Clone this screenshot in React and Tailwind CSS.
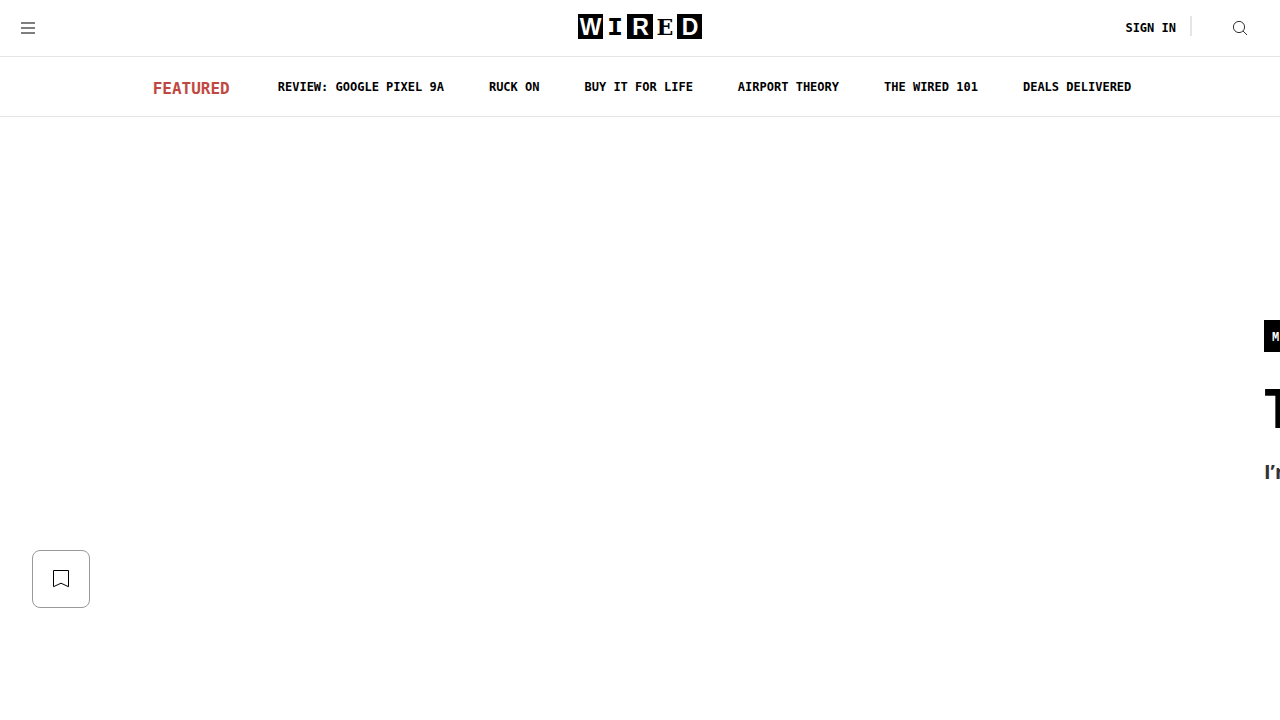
import React from "react";

const featuredLinks = [
  "Review: Google Pixel 9a",
  "Ruck On",
  "Buy It for Life",
  "Airport Theory",
  "The Wired 101",
  "Deals Delivered"
];

function Logo() {
  return (
    <svg width="124" height="33" viewBox="0 -4 124 33" role="img" aria-label="WIRED">
      <path d="M0 0h25v25H0zM49 0h26v25H49zM99 0h25v25H99z" fill="#000" />
      <g textAnchor="middle" fontWeight="700">
        <g fill="#fff" fontSize="23" fontFamily="'Liberation Sans', sans-serif">
          <text x="12.5" y="21">W</text>
          <text x="62.5" y="21">R</text>
          <text x="112" y="21">D</text>
        </g>
        <text x="37" y="21" fontSize="26" fontFamily="'Liberation Mono', monospace">I</text>
        <text x="87" y="21" fontSize="22" fontFamily="'DejaVu Serif', serif">E</text>
      </g>
    </svg>
  );
}

function Header() {
  return (
    <header className="grid h-[57px] grid-cols-3 items-center border-b border-[#e5e5e5] px-5">
      <button type="button" aria-label="Open navigation menu" className="w-4">
        <svg width="16" height="16" viewBox="0 0 16 16" fill="#7f7f7f">
          <path d="M1 2h14v2H1zM1 7h14v2H1zM1 12h14v2H1z" />
        </svg>
      </button>
      <a href="#home" className="justify-self-center pb-1">
        <Logo />
      </a>
      <div className="flex items-center justify-end pr-3">
        <a href="#sign-in" className="font-['DejaVu_Sans_Mono',monospace] text-xs leading-4 font-bold uppercase">
          Sign In
        </a>
        <span className="mr-10 mb-1 ml-3.5 h-5 w-0.5 bg-[#e5e5e5]" />
        <button type="button" aria-label="Search">
          <svg width="16" height="16" viewBox="0 0 16 16" fill="none" stroke="#333">
            <circle cx="7" cy="7" r="5.6" />
            <path d="M11 11l4 4" />
          </svg>
        </button>
      </div>
    </header>
  );
}

function FeaturedNav() {
  return (
    <nav
      aria-label="Featured"
      className="flex h-15 items-center justify-center border-b border-[#e5e5e5] pl-1 font-['DejaVu_Sans_Mono',monospace] font-bold uppercase"
    >
      <span className="mr-12 pt-1 text-base leading-5 text-[#c14842]">Featured</span>
      <ul className="flex gap-[45px] text-xs leading-4">
        {featuredLinks.map((label) => (
          <li key={label}>
            <a href="#featured">{label}</a>
          </li>
        ))}
      </ul>
    </nav>
  );
}

function Story() {
  return (
    <main>
      {/* Lead media takes the row, the headline block starts at its right edge */}
      <div className="flex h-[433px] overflow-hidden">
        <div className="w-[calc(100%-16px)] shrink-0" />
        <div className="shrink-0 pt-[203px]">
          <a
            href="#section"
            className="flex h-8 w-8 items-center bg-black px-2 pt-1 font-['Liberation_Mono',monospace] text-xs font-bold text-white"
          >
            M
          </a>
          <h1 className="mt-[26px] font-['Open_Sans',sans-serif] text-[53px] leading-[60px] font-bold text-black">
            T
          </h1>
          <p className="mt-[22px] font-['Open_Sans',sans-serif] text-xl leading-6 font-bold text-[#333]">
            I’m
          </p>
        </div>
      </div>
      <button
        type="button"
        aria-label="Save story"
        className="ml-8 flex size-[58px] items-center justify-center rounded-lg border border-[#999]"
      >
        <svg width="18" height="20" viewBox="0 0 18 20" fill="none" stroke="#000">
          <path d="M1.5 1.5h15v16.2L9 14.2l-7.5 3.5z" />
        </svg>
      </button>
    </main>
  );
}

export default function App() {
  return (
    <div className="min-h-screen bg-white text-black">
      <Header />
      <FeaturedNav />
      <Story />
    </div>
  );
}
